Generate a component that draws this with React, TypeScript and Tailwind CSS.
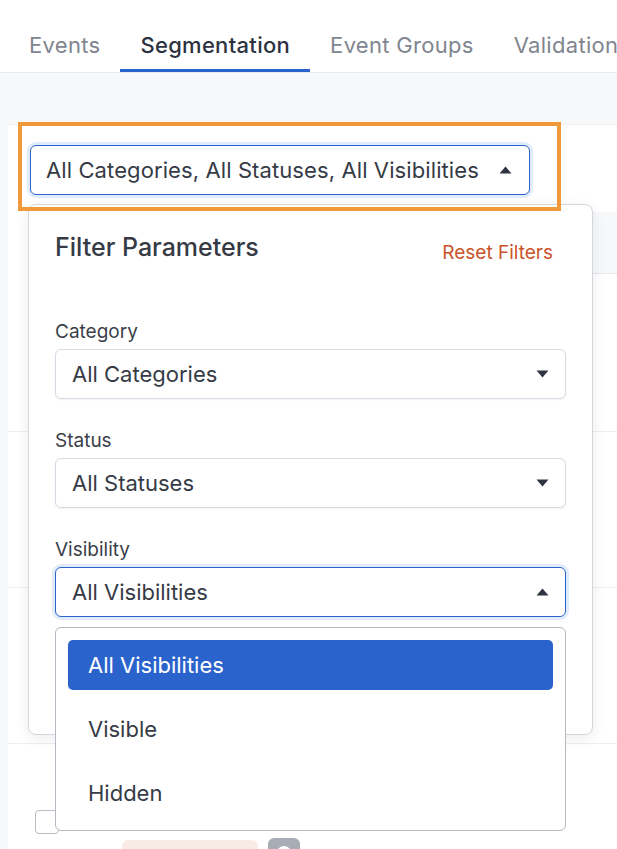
import React from "react";

const tabs = ["Events", "Segmentation", "Event Groups", "Validation"];

function Caret({ up = false }: { up?: boolean }) {
  return (
    <svg width="13" height="8" viewBox="0 0 13 8" className="shrink-0">
      {up ? (
        <path d="M6.5 0.5 L12.5 7.5 L0.5 7.5 Z" fill="#2f3540" />
      ) : (
        <path d="M0.5 0.5 L12.5 0.5 L6.5 7.5 Z" fill="#2f3540" />
      )}
    </svg>
  );
}

function SelectBox({ value, open = false }: { value: string; open?: boolean }) {
  return (
    <div
      className={
        open
          ? "h-[50px] w-full rounded-[6px] border border-[#2b63cc] ring-[3px] ring-[#e0ebfb] bg-white flex items-center justify-between pl-[16px] pr-[16px]"
          : "h-[50px] w-full rounded-[6px] border border-[#d6dae4] shadow-[0_1px_2px_rgba(30,40,60,0.06)] bg-white flex items-center justify-between pl-[16px] pr-[16px]"
      }
    >
      <span className="text-[22px] leading-6 text-[#363b46]">{value}</span>
      <Caret up={open} />
    </div>
  );
}

function Field({ label, children }: { label: string; children: React.ReactNode }) {
  return (
    <div className="flex flex-col">
      <span className="text-[19px] leading-6 text-[#3a3f4a]">{label}</span>
      <div className="mt-[5px] relative">{children}</div>
    </div>
  );
}

function VisibilityMenu() {
  const options = ["All Visibilities", "Visible", "Hidden"];
  return (
    <div className="absolute left-0 top-[60px] w-full rounded-[6px] border border-[#b4b8c0] bg-white px-[12px] py-[12px] flex flex-col gap-[14px] z-20">
      {options.map((o, i) => (
        <div
          key={o}
          className={
            i === 0
              ? "h-[50px] rounded-[5px] bg-[#2b63cc] text-white flex items-center px-[20px] text-[22px]"
              : "h-[50px] rounded-[5px] text-[#363b46] flex items-center px-[20px] text-[22px]"
          }
        >
          {o}
        </div>
      ))}
    </div>
  );
}

function FilterPopover() {
  return (
    <div className="absolute left-[28px] top-[204px] w-[565px] h-[531px] rounded-[8px] border border-[#d3d6dc] bg-white shadow-[0_4px_14px_rgba(20,30,50,0.08)] px-[26px] pt-[29px] z-10">
      <div className="flex items-center justify-between h-[28px]">
        <span className="text-[25px] font-medium text-[#353a45]">Filter Parameters</span>
        <span className="text-[19px] text-[#c9522a] mt-[11px] mr-[13px]">Reset Filters</span>
      </div>
      <div className="mt-[58px] flex flex-col gap-[30px]">
        <Field label="Category">
          <SelectBox value="All Categories" />
        </Field>
        <Field label="Status">
          <SelectBox value="All Statuses" />
        </Field>
        <Field label="Visibility">
          <SelectBox value="All Visibilities" open />
          <VisibilityMenu />
        </Field>
      </div>
    </div>
  );
}

export default function App() {
  return (
    <div className="relative w-[617px] h-[849px] overflow-hidden bg-white font-['Inter',sans-serif]">
      {/* tab bar */}
      <div className="h-[73px] border-b border-[#e7e9ed] flex items-end pl-[9px] whitespace-nowrap">
        {tabs.map((t) => (
          <div
            key={t}
            className={
              t === "Segmentation"
                ? "px-5 pb-3 border-b-[3px] border-[#2b63cc] text-[22px] leading-6 tracking-[0.3px] text-[#2c3240] font-medium"
                : "px-5 pb-3 border-b-[3px] border-transparent text-[22px] leading-6 tracking-[0.3px] text-[#80858f]"
            }
          >
            {t}
          </div>
        ))}
      </div>

      <div className="bg-[#f7f8fa] h-full">
        <div className="h-[51px]" />
        <div className="ml-2 bg-white border-t border-[#eceef1] h-full">
          {/* toolbar */}
          <div className="pl-[22px] pt-[20px] pb-[17px]">
            <button className="h-[50px] w-[500px] rounded-[6px] border border-[#2b63cc] ring-[3px] ring-[#e0ebfb] bg-white flex items-center justify-between pl-[15px] pr-[17px]">
              <span className="text-[22px] leading-6 tracking-[0.1px] text-[#363b46]">
                All Categories, All Statuses, All Visibilities
              </span>
              <Caret up />
            </button>
          </div>

          {/* table */}
          <div className="h-[62px] ml-5 bg-[#f7f8fa] border-b border-[#e6e8ec]" />
          <div className="h-[158px] border-b border-[#eceef1]" />
          <div className="h-[156px] border-b border-[#eceef1]" />
          <div className="h-[156px] border-b border-[#eceef1]" />
          <div className="flex items-start pl-[27px] pt-[66px]">
            <div className="w-6 h-6 rounded-[4px] border border-[#b9bdc5] bg-white shrink-0" />
            <div className="ml-[63px] mt-[28px] flex items-start gap-[10px]">
              <div className="mt-[2px] h-[30px] w-[136px] rounded-[6px] bg-[#f8ebe5] px-3 flex items-center text-[16px] leading-5 text-[#c9522a] whitespace-nowrap">
                Add keyword
              </div>
              <div className="w-[32px] h-[32px] rounded-[6px] bg-[#a7acb5] flex items-start justify-center pt-[8px]">
                <div className="w-[14px] h-[14px] rounded-full bg-white" />
              </div>
            </div>
          </div>
        </div>
      </div>

      {/* highlight frame around the filter trigger */}
      <div className="absolute left-[18px] top-[122px] w-[543px] h-[89px] border-4 border-[#f0993a] z-30 pointer-events-none" />

      <FilterPopover />
    </div>
  );
}
